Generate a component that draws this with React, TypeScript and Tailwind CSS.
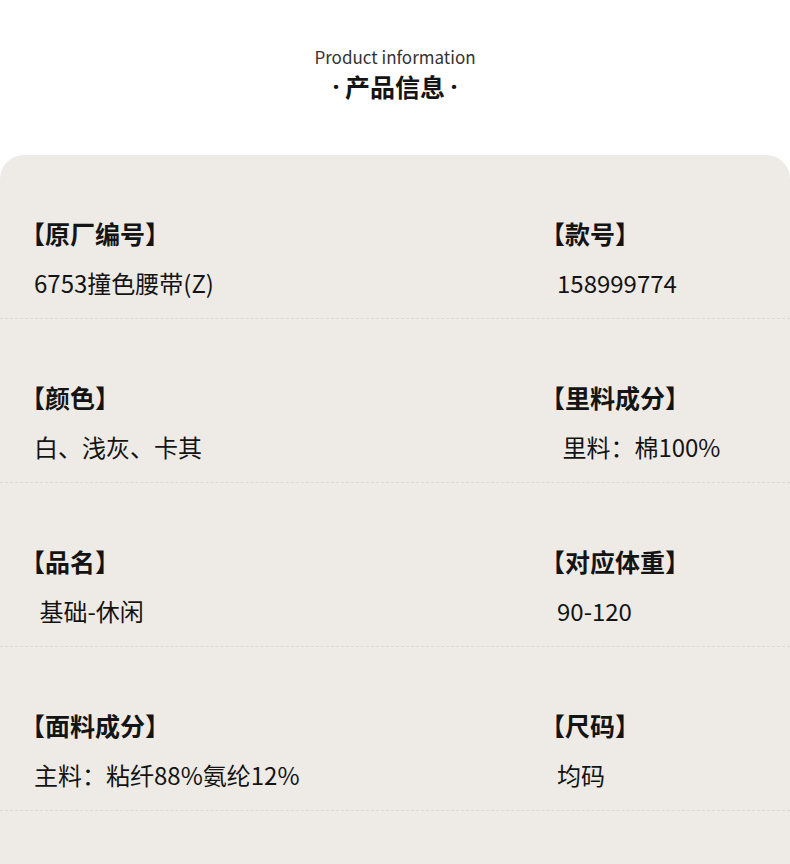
const rows: [string, string, string, string][] = [
  ["【原厂编号】", "6753撞色腰带(Z)", "【款号】", "158999774"],
  ["【颜色】", "白、浅灰、卡其", "【里料成分】", " 里料：棉100%"],
  ["【品名】", " 基础-休闲", "【对应体重】", "90-120"],
  ["【面料成分】", "主料：粘纤88%氨纶12%", "【尺码】", "均码"],
];

const font = { fontFamily: '"Noto Sans CJK SC", "Noto Sans", sans-serif' };
const latin = { fontFamily: '"Noto Sans", sans-serif' };

export default function App() {
  return (
    <div className="w-[790px] h-[864px] bg-white overflow-hidden text-[#141414]" style={font}>
      {/* 标题 */}
      <div className="h-[155px] flex flex-col items-center pt-[44px]">
        <div className="text-[17px] leading-[26px] text-[#333]">Product information</div>
        <div className="flex items-center text-[25px] leading-[36px] font-bold mt-[-2px]">
          <span className="w-[18px] text-center" style={latin}>·</span>
          <span>产品信息</span>
          <span className="w-[18px] text-center" style={latin}>·</span>
        </div>
      </div>

      <div className="bg-[#eeebe6] rounded-t-[24px] h-[709px]">
        {rows.map(([l1, v1, l2, v2], i) => (
          <div
            key={i}
            className="grid grid-cols-[540px_1fr] pt-[64px] pb-[21px] border-b border-dashed border-[#dcd9d3]"
          >
            <div className="pl-[20px]">
              <div className="text-[25px] leading-[28px] font-bold">{l1}</div>
              <div className="text-[24px] leading-[28px] mt-[22px] pl-[14px] whitespace-pre">{v1}</div>
            </div>
            <div>
              <div className="text-[25px] leading-[28px] font-bold">{l2}</div>
              <div className="text-[24px] leading-[28px] mt-[22px] pl-[17px] whitespace-pre">{v2}</div>
            </div>
          </div>
        ))}
      </div>
    </div>
  );
}
